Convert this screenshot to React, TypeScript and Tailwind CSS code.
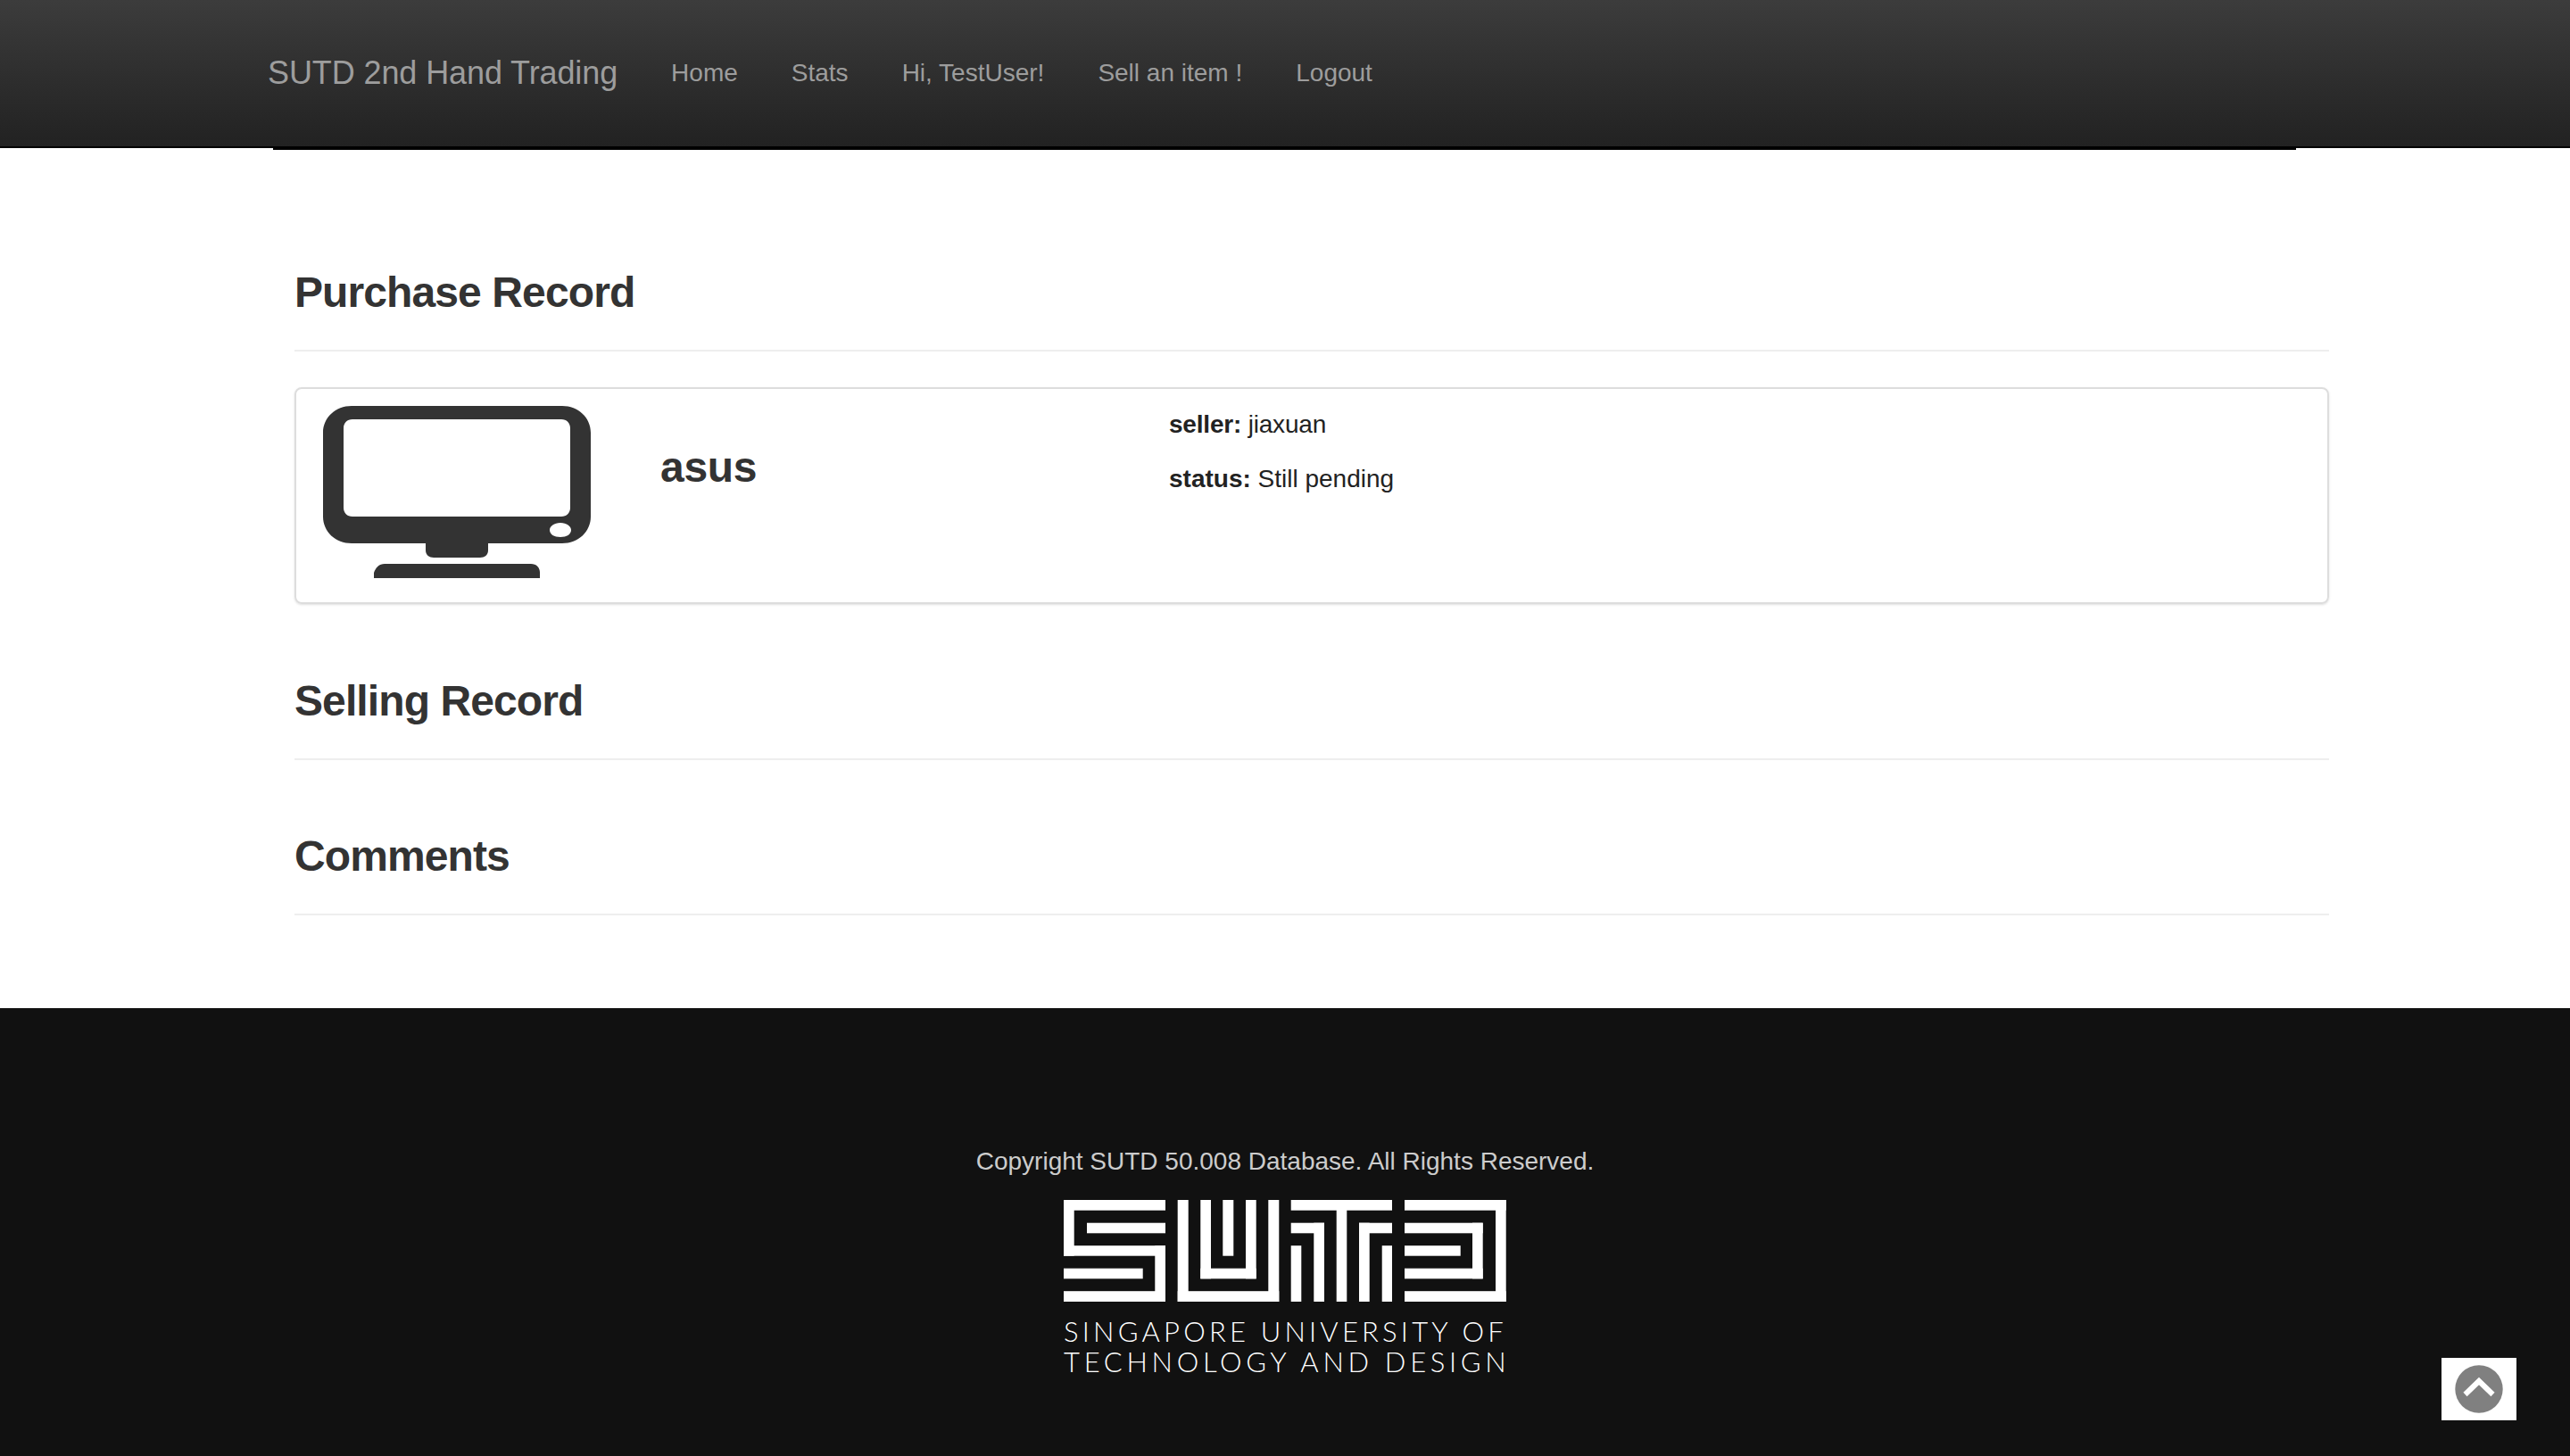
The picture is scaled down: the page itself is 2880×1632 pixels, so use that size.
const sans = "font-['Liberation_Sans',Arial,sans-serif]";

function SutdLogo() {
  const bars = [
    // S
    [0, 0, 114, 11.7], [0, 0, 11.7, 62.7], [0, 51.2, 114, 11.5], [102.3, 51.2, 11.7, 62.8], [0, 102.2, 114, 11.8],
    [26, 25.7, 88, 11.6], [0, 76.7, 88.7, 11.6],
    // U with inner maze
    [127.7, 0, 12, 114], [127.7, 102.2, 113.6, 11.8], [229.3, 0, 12, 114],
    [153.3, 0, 11.7, 88.3], [153.3, 76.7, 62.4, 11.6], [204, 0, 11.7, 88.3], [178.3, 0, 12, 62.7],
    // T
    [254.7, 0, 113.3, 11.7], [305.7, 0, 11.6, 114],
    [254.7, 25.7, 37.3, 11.6], [280.3, 25.7, 11.7, 88.3], [254.7, 51.2, 11.6, 62.8],
    [331, 25.7, 37, 11.6], [331, 25.7, 11.7, 88.3], [356.7, 51.2, 11.3, 62.8],
    // D
    [382, 0, 113.7, 11.7], [484, 0, 11.7, 114], [382, 102.2, 113.7, 11.8],
    [382, 25.7, 87.7, 11.6], [458, 25.7, 11.7, 62.6], [382, 76.7, 87.7, 11.6], [382, 51.2, 62.7, 11.5],
  ];
  return (
    <svg viewBox="0 0 496 114" className="w-[496px] h-[114px] block">
      {bars.map(([x, y, w, h], i) => (
        <rect key={i} x={x} y={y} width={w} height={h} fill="#fff" />
      ))}
    </svg>
  );
}

function MonitorIcon() {
  return (
    <svg viewBox="0 0 300 193" className="w-[300px] h-[193px] block shrink-0">
      <path
        fillRule="evenodd"
        fill="#333"
        d="M32 0H268C286 0 300 13 300 30V124C300 141 286 154 268 154H32C14 154 0 141 0 124V30C0 13 14 0 32 0ZM33 15C27 15 23 19 23 25V114C23 120 27 124 33 124H267C273 124 277 120 277 114V25C277 19 273 15 267 15ZM266 131C259 131 254 135 254 139C254 144 259 147 266 147C273 147 278 144 278 139C278 135 273 131 266 131Z"
      />
      <path fill="#333" d="M115 154H185V162C185 167 181 170 176 170H124C119 170 115 167 115 162Z" />
      <path fill="#333" d="M57 193V187C59 181 63 177 69 177H233C239 177 243 181 243 187V193Z" />
    </svg>
  );
}

function SectionHeader({ title }: { title: string }) {
  return (
    <div className="pb-[38px] border-b-2 border-[#eee]">
      <h2 className="text-[48px] leading-[53px] font-bold tracking-[-0.9px] text-[#333]">{title}</h2>
    </div>
  );
}

export default function App() {
  return (
    <div className={`${sans} w-[2880px] h-[1632px] relative overflow-hidden bg-white text-[28px] text-[#333]`}>
      <nav className="h-[166px] border-b-2 border-black bg-gradient-to-b from-[#3c3c3c] to-[#222] flex items-center pl-[300px] text-[#9d9d9d]">
        <span className="text-[36px] tracking-[-0.1px] mr-[60px]">SUTD 2nd Hand Trading</span>
        <div className="flex gap-[60px]">
          <a>Home</a>
          <a>Stats</a>
          <a>Hi, TestUser!</a>
          <a>Sell an item !</a>
          <a>Logout</a>
        </div>
      </nav>
      <div className="h-[2px] ml-[306px] w-[2267px] bg-black" />

      <main className="ml-[330px] w-[2280px] h-[962px] pt-[133px]">
        <SectionHeader title="Purchase Record" />
        <div className="mt-[40px] h-[243px] border-2 border-[#ddd] rounded-lg shadow-sm flex pl-[30px] pt-[19px]">
          <MonitorIcon />
          <h3 className="ml-[78px] mt-[42px] w-[570px] text-[48px] leading-[53px] font-bold tracking-[-0.3px]">asus</h3>
          <div className="text-[#222] pt-[1px]">
            <p className="leading-[40px] tracking-[-0.2px]"><b>seller:</b> jiaxuan</p>
            <p className="leading-[40px] mt-[21px]"><b>status:</b> Still pending</p>
          </div>
        </div>
        <div className="mt-[82px]">
          <SectionHeader title="Selling Record" />
        </div>
        <div className="mt-[81px]">
          <SectionHeader title="Comments" />
        </div>
      </main>

      <footer className="h-[502px] bg-[#111] flex flex-col items-center pt-[152px]">
        <p className="leading-[40px] text-[#ccc]">Copyright SUTD 50.008 Database. All Rights Reserved.</p>
        <div className="mt-[23px]">
          <SutdLogo />
        </div>
        <div className="mt-[16px] w-[496px] font-['Lato',sans-serif] font-light text-[31px] leading-[34px] text-white whitespace-nowrap">
          <div className="tracking-[4.2px]">SINGAPORE UNIVERSITY OF</div>
          <div className="tracking-[4.7px]">TECHNOLOGY AND DESIGN</div>
        </div>
      </footer>

      {/* back to top button */}
      <div className="absolute left-[2736px] top-[1522px] w-[84px] h-[70px] bg-white flex items-center justify-center">
        <svg viewBox="0 0 54 54" className="w-[54px] h-[54px]">
          <circle cx="27" cy="27" r="26.7" fill="#808080" />
          <path d="M11.5 33L27 18L42.5 33" fill="none" stroke="#fff" strokeWidth="6" />
        </svg>
      </div>
    </div>
  );
}
